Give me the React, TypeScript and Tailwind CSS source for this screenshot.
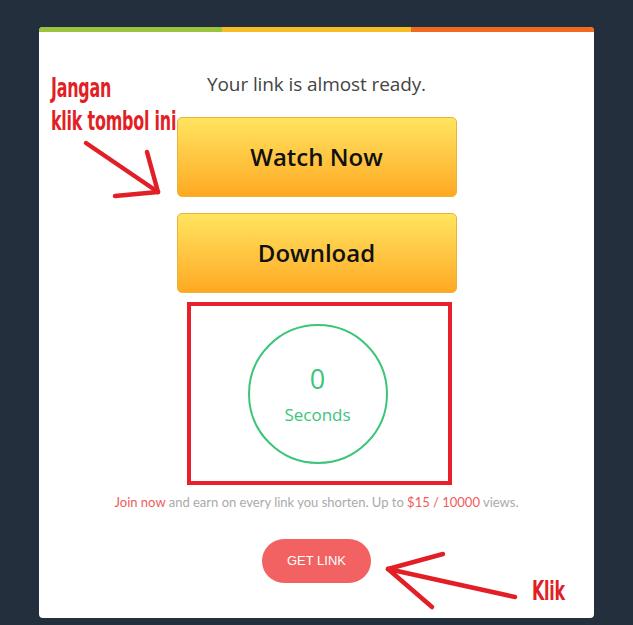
import React from 'react';

const font = { fontFamily: 'Lato, "Open Sans", sans-serif' };
const wide = { fontFamily: '"Open Sans", Lato, sans-serif' };
const hand = { fontFamily: '"DejaVu Sans", sans-serif', fontStretch: 'condensed' as const };

function Annotations() {
  return (
    <div className="pointer-events-none absolute inset-0">
      <div
        className="absolute left-[51px] top-[72px] origin-left scale-x-[0.68] text-[26px] font-semibold leading-[33px] tracking-[-0.3px] text-[#e21f26]"
        style={hand}
      >
        <div>Jangan</div>
        <div>klik tombol ini</div>
      </div>
      <div
        className="absolute left-[532px] top-[575px] origin-left scale-x-[0.68] text-[26px] font-semibold leading-[33px] tracking-[-0.3px] text-[#e21f26]"
        style={hand}
      >
        Klik
      </div>
      <svg className="absolute left-0 top-0" width="633" height="625" viewBox="0 0 633 625">
        <g stroke="#e21f26" strokeWidth="4.5" strokeLinecap="round" fill="none">
          <path d="M86 143 L158 192" />
          <path d="M147 152 L158 192" />
          <path d="M115 196 L158 192" />
          <path d="M515 597 L388 569" />
          <path d="M443 554 L388 569" />
          <path d="M432 607 L388 569" />
        </g>
      </svg>
    </div>
  );
}

export default function App() {
  return (
    <div className="relative min-h-[625px] w-full overflow-hidden bg-[#242f3d] pt-[27px]" style={font}>
      <div className="mx-auto w-[555px] overflow-hidden rounded-[4px] bg-white">
        {/* colour strip */}
        <div className="flex h-[5px]">
          <div className="w-[183px] bg-[#9ac43d]" />
          <div className="w-[189px] bg-[#f7bd25]" />
          <div className="flex-1 bg-[#f16a1d]" />
        </div>

        <div className="flex flex-col items-center pb-[35px] pt-[40px]">
          <p className="text-[19px] leading-[24px] tracking-[-0.1px] text-[#444]" style={wide}>
            Your link is almost ready.
          </p>

          <div className="mt-[21px] flex flex-col gap-[16px]">
            <button
              className="h-[80px] w-[280px] rounded-[5px] border border-[#e8b33c] bg-gradient-to-b from-[#ffe45e] to-[#ffa91f] text-[24px] font-semibold text-[#111]"
              style={wide}
            >
              Watch Now
            </button>
            <button
              className="h-[80px] w-[280px] rounded-[5px] border border-[#e8b33c] bg-gradient-to-b from-[#ffe45e] to-[#ffa91f] text-[24px] font-semibold text-[#111]"
              style={wide}
            >
              Download
            </button>
          </div>

          <div className="ml-[5px] mt-[9px] flex h-[183px] w-[265px] items-center justify-center border-4 border-[#e8202a]">
            <div
              className="-ml-[3px] flex h-[140px] w-[140px] flex-col items-center justify-center rounded-full border-2 border-[#3cc57a] text-[#3cc57a]"
              style={wide}
            >
              <span className="text-[27px] leading-[32px]">0</span>
              <span className="mt-[10px] text-[17px] leading-[20px]">Seconds</span>
            </div>
          </div>

          <p className="mt-[8px] text-[13px] leading-[18px] text-[#aaa]">
            <span className="text-[#ef5a5a]">Join now</span> and earn on every link you shorten. Up to{' '}
            <span className="text-[#ef5a5a]">$15 / 10000</span> views.
          </p>

          <button
            className="mt-[28px] h-[44px] w-[109px] rounded-full bg-[#f26262] text-[13px] text-white"
            style={{ fontFamily: '"Liberation Sans", Arial, sans-serif' }}
          >
            GET LINK
          </button>
        </div>
      </div>
      <Annotations />
    </div>
  );
}
